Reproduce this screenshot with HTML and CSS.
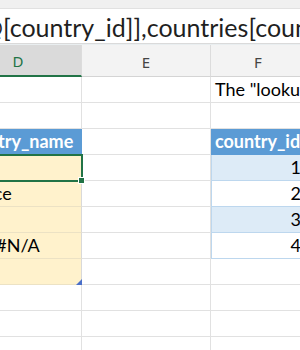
FILE: index.html
```html
<!DOCTYPE html>
<html lang="en">
<head>
    <meta charset="UTF-8">
    <meta name="viewport" content="width=device-width, initial-scale=1.0">
    <title>countries - Excel</title>
    <link rel="stylesheet" href="styles.css">
</head>
<body>
    <div class="app">
        <div class="toolbar-strip"></div>
        <div class="formula-bar">
            <span class="formula">@[country_id]],countries[country_id],countries[country_name])</span>
        </div>
        <div class="sheet">
            <div class="grid">
                <!-- column headers -->
                <div class="col-head selected">D</div>
                <div class="col-head">E</div>
                <div class="col-head">F</div>

                <!-- row 1 -->
                <div class="cell"></div>
                <div class="cell"></div>
                <div class="cell note">The "lookup" column uses XLOOKUP</div>

                <!-- row 2 -->
                <div class="cell"></div>
                <div class="cell"></div>
                <div class="cell"></div>

                <!-- row 3: table headers -->
                <div class="cell tbl-head">country_name</div>
                <div class="cell"></div>
                <div class="cell tbl-head">country_id</div>

                <!-- rows 4-8 -->
                <div class="cell lookup active">USA</div>
                <div class="cell"></div>
                <div class="cell num band">1</div>

                <div class="cell lookup">France</div>
                <div class="cell"></div>
                <div class="cell num band-white">2</div>

                <div class="cell lookup">Italy</div>
                <div class="cell"></div>
                <div class="cell num band">3</div>

                <div class="cell lookup error">#N/A</div>
                <div class="cell"></div>
                <div class="cell num band-white">4</div>

                <div class="cell lookup last"></div>
                <div class="cell"></div>
                <div class="cell"></div>

                <!-- empty rows -->
                <div class="cell"></div>
                <div class="cell"></div>
                <div class="cell"></div>

                <div class="cell"></div>
                <div class="cell"></div>
                <div class="cell"></div>

                <div class="cell"></div>
                <div class="cell"></div>
                <div class="cell"></div>
            </div>
        </div>
    </div>
</body>
</html>
```

FILE: styles.css
```css
body {
    margin: 0;
    font-family: Lato, "Liberation Sans", sans-serif;
    background-color: #ffffff;
}
.app {
    width: 300px;
    height: 350px;
    overflow: hidden;
}
.toolbar-strip {
    height: 8px;
    background-color: #f0f0f0;
    border-bottom: 1px solid #e1e1e1;
}
.formula-bar {
    height: 34px;
    background-color: #ffffff;
    border-bottom: 1px solid #dadada;
    overflow: hidden;
    white-space: nowrap;
    font-size: 25px;
    line-height: 36px;
    color: #1f1f1f;
}
.formula {
    display: inline-block;
    margin-left: -18px;
}
.sheet {
    background-color: #e9eef0;
    padding-top: 1px;
    overflow: hidden;
}
.grid {
    display: grid;
    grid-template-columns: 127px 129px 95px;
    grid-auto-rows: 26px;
    grid-template-rows: 32px;
    margin-left: -45px;
    width: 351px;
}
.col-head {
    box-sizing: border-box;
    background-color: #f3f3f3;
    border-right: 1px solid #dcdcdc;
    border-bottom: 1px solid #d4d4d4;
    font-family: "Noto Sans", sans-serif;
    font-size: 15px;
    line-height: 34px;
    text-align: center;
    color: #444444;
}
.col-head.selected {
    background-color: #dadada;
    color: #217346;
    border-bottom: 2px solid #217346;
    line-height: 33px;
}
.cell {
    position: relative;
    box-sizing: border-box;
    background-color: #ffffff;
    border-right: 1px solid #e1e1e1;
    border-bottom: 1px solid #e1e1e1;
    padding: 0 4px;
    font-size: 18px;
    line-height: 25px;
    color: #000000;
    white-space: nowrap;
}
.tbl-head {
    background-color: #5b9bd5;
    border-color: #5b9bd5;
    color: #ffffff;
    font-weight: bold;
}
.lookup {
    background-color: #fff2cc;
    border-bottom-color: #ece2c4;
    border-right-color: #d9d9d9;
}
.error {
    text-align: center;
}
.active {
    outline: 2px solid #217346;
    outline-offset: -1px;
    z-index: 1;
}
.active::after {
    content: "";
    position: absolute;
    right: -4px;
    bottom: -4px;
    width: 5px;
    height: 5px;
    background-color: #217346;
    border: 1px solid #ffffff;
}
.last::after {
    content: "";
    position: absolute;
    right: -1px;
    bottom: -1px;
    width: 6px;
    height: 6px;
    background-color: #4a6fc9;
    clip-path: polygon(100% 0, 100% 100%, 0 100%);
}
.num {
    text-align: right;
    border-color: #bdd7ee;
    border-left: 1px solid #bdd7ee;
}
.band {
    background-color: #ddebf7;
}
.band-white {
    background-color: #ffffff;
}
```
